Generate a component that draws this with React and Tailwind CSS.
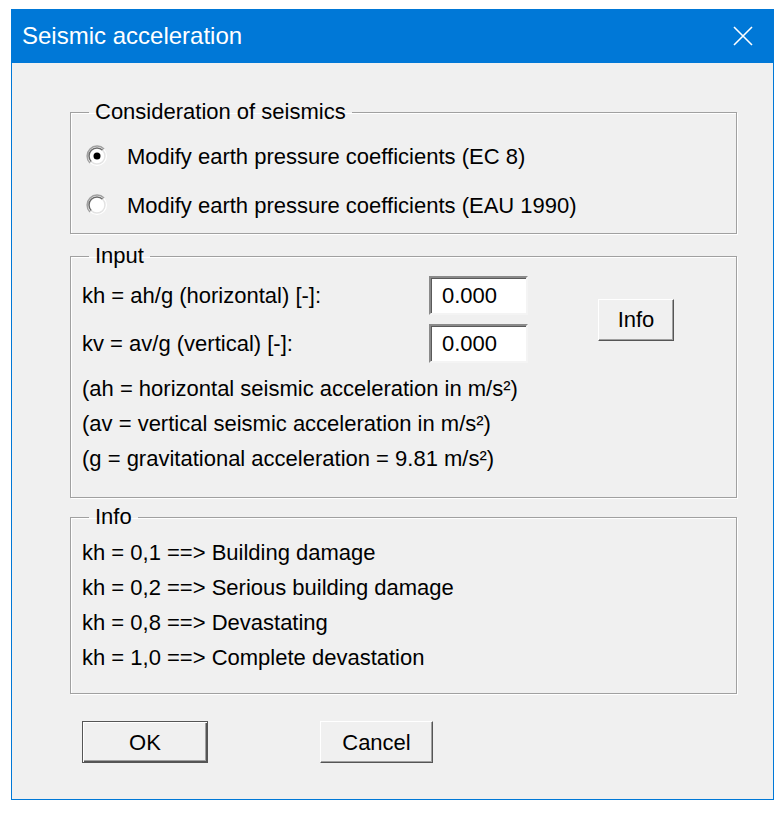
import React from 'react';

// Windows-classic style dialog: "Seismic acceleration"

function Radio({ checked }) {
    return (
        <svg width="22" height="22" viewBox="0 0 22 22" className="shrink-0">
            <circle cx="11" cy="11" r="10" fill="#ffffff" />
            <path d="M3.93 18.07 A10 10 0 0 1 18.07 3.93" fill="none" stroke="#a0a0a0" strokeWidth="1.5" />
            <path d="M5.34 16.66 A8 8 0 0 1 16.66 5.34" fill="none" stroke="#696969" strokeWidth="1.5" />
            <path d="M16.66 5.34 A8 8 0 0 1 5.34 16.66" fill="none" stroke="#e3e3e3" strokeWidth="1.5" />
            {checked && <circle cx="11" cy="11" r="3.5" fill="#000000" />}
        </svg>
    );
}

function GroupBox({ title, className = '', children }) {
    return (
        <fieldset className={`ml-[58px] w-[667px] border border-[#a0a0a0] shadow-[inset_1px_1px_0_#ffffff,1px_1px_0_#ffffff] ${className}`}>
            <legend className="ml-[18px] px-[6px] h-[24px] leading-[24px]">{title}</legend>
            {children}
        </fieldset>
    );
}

function TextBox({ value }) {
    return (
        <div className="w-[99px] h-[39px] bg-white border-2 border-t-[#8a8a8a] border-l-[#8a8a8a] border-r-[#f4f4f4] border-b-[#f4f4f4] shadow-[inset_1px_1px_0_#5a5a5a] flex items-center pl-[11px]">
            {value}
        </div>
    );
}

function Button({ label, isDefault = false, className = '' }) {
    const base = 'flex items-center justify-center bg-[#f0f0f0] h-[42px]';
    const edge = isDefault
        ? 'border border-[#555555] shadow-[inset_1px_1px_0_#ffffff,inset_-1px_-1px_0_#555555,inset_-2px_-2px_0_#a0a0a0]'
        : 'border border-t-white border-l-white border-r-[#555555] border-b-[#555555] shadow-[inset_-1px_-1px_0_#a0a0a0]';
    return <div className={`${base} ${edge} ${className}`}>{label}</div>;
}

export default function App() {
    return (
        <div className="min-h-screen bg-white pt-[9px] pl-[11px] font-['Liberation_Sans',Arial,sans-serif] text-[22px] text-black">
            <div className="w-[763px] bg-[#0078d7] flex flex-col">
                {/* Title bar */}
                <div className="h-[54px] flex items-center justify-between pl-[11px] pr-[21px] text-white">
                    <span className="text-[24px] leading-none">Seismic acceleration</span>
                    <svg width="20" height="20" viewBox="0 0 20 20">
                        <path d="M1 1 L19 19 M19 1 L1 19" stroke="#ffffff" strokeWidth="1.6" fill="none" />
                    </svg>
                </div>

                {/* Body */}
                <div className="mx-[1px] mb-[1px] bg-[#f0f0f0] pt-[37px] pb-[36px]">
                    <GroupBox title="Consideration of seismics" className="pt-[14px] pb-[10px]">
                        <div className="flex flex-col gap-[13px] pl-[15px]">
                            <div className="h-[36px] flex items-center gap-[19px]">
                                <Radio checked />
                                <span>Modify earth pressure coefficients (EC 8)</span>
                            </div>
                            <div className="h-[36px] flex items-center gap-[19px]">
                                <Radio />
                                <span>Modify earth pressure coefficients (EAU 1990)</span>
                            </div>
                        </div>
                    </GroupBox>

                    <GroupBox title="Input" className="mt-[10px] pt-[8px] pb-[21px]">
                        <div className="pl-[11px]">
                            <div className="flex items-center">
                                <div className="flex flex-col gap-[9px]">
                                    <div className="flex items-center">
                                        <span className="w-[347px]">kh = ah/g (horizontal) [-]:</span>
                                        <TextBox value="0.000" />
                                    </div>
                                    <div className="flex items-center">
                                        <span className="w-[347px]">kv = av/g (vertical) [-]:</span>
                                        <TextBox value="0.000" />
                                    </div>
                                </div>
                                <Button label="Info" className="ml-[70px] w-[76px]" />
                            </div>
                            <div className="mt-[8px] flex flex-col">
                                <div className="h-[35px] flex items-center">(ah = horizontal seismic acceleration in m/s²)</div>
                                <div className="h-[35px] flex items-center">(av = vertical seismic acceleration in m/s²)</div>
                                <div className="h-[35px] flex items-center">(g = gravitational acceleration = 9.81 m/s²)</div>
                            </div>
                        </div>
                    </GroupBox>

                    <GroupBox title="Info" className="mt-[7px] pt-[6px] pb-[18px]">
                        <div className="pl-[11px] flex flex-col">
                            <div className="h-[35px] flex items-center">kh = 0,1 ==&gt; Building damage</div>
                            <div className="h-[35px] flex items-center">kh = 0,2 ==&gt; Serious building damage</div>
                            <div className="h-[35px] flex items-center">kh = 0,8 ==&gt; Devastating</div>
                            <div className="h-[35px] flex items-center">kh = 1,0 ==&gt; Complete devastation</div>
                        </div>
                    </GroupBox>

                    <div className="mt-[27px] ml-[70px] flex gap-[112px]">
                        <Button label="OK" isDefault className="w-[126px]" />
                        <Button label="Cancel" className="w-[113px]" />
                    </div>
                </div>
            </div>
        </div>
    );
}
